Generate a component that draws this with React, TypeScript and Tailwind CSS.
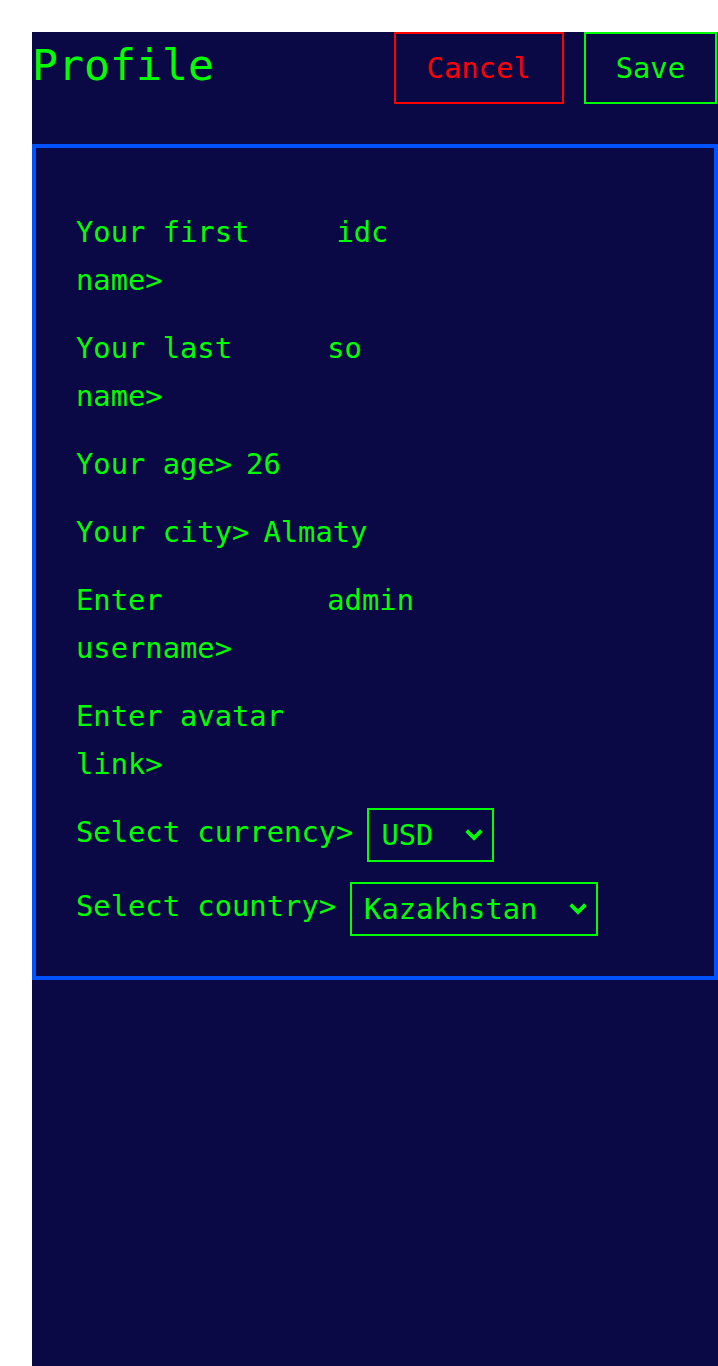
import { ChangeEvent, useState } from 'react';

interface Field {
    label: string;
    value: string;
}

const fields: Field[] = [
    { label: 'Your first name>', value: 'idc' },
    { label: 'Your last name>', value: 'so' },
    { label: 'Your age>', value: '26' },
    { label: 'Your city>', value: 'Almaty' },
    { label: 'Enter username>', value: 'admin' },
    { label: 'Enter avatar link>', value: '' },
];

const currencies = ['USD', 'EUR', 'KZT', 'RUB'];
const countries = ['Kazakhstan', 'Russia', 'USA', 'Germany'];

function Chevron() {
    return (
        <svg
            className="pointer-events-none absolute right-[10px] top-1/2 -translate-y-1/2"
            width="20"
            height="14"
            viewBox="0 0 20 14"
            fill="none"
        >
            <path d="M4 4 L10 10 L16 4" stroke="#00ff00" strokeWidth="3.8" strokeLinecap="square" />
        </svg>
    );
}

function SelectRow({ label, options, value, onChange }: {
    label: string;
    options: string[];
    value: string;
    onChange: (v: string) => void;
}) {
    return (
        <div className="mt-[20px] flex items-start gap-[14px]">
            <label className="shrink-0 leading-[48px]">{label}</label>
            <span className="relative inline-block">
                <select
                    value={value}
                    onChange={(e: ChangeEvent<HTMLSelectElement>) => onChange(e.target.value)}
                    className="h-[54px] appearance-none border-2 border-[#00ff00] bg-transparent pl-[12px] pr-[58px] leading-[48px] text-[#00ff00] outline-none"
                >
                    {options.map(o => (
                        <option key={o} value={o} className="bg-[#0b0846]">{o}</option>
                    ))}
                </select>
                <Chevron />
            </span>
        </div>
    );
}

export default function App() {
    const [currency, setCurrency] = useState('USD');
    const [country, setCountry] = useState('Kazakhstan');

    return (
        <div className="min-h-screen bg-white pl-[32px] pt-[32px] font-['DejaVu_Sans_Mono',monospace] text-[28.8px] text-[#00ff00]">
            <div className="min-h-[1334px] bg-[#0b0846]">
                {/* Header */}
                <div className="flex items-start">
                    <h1 className="flex-1 pt-[8px] text-[43.2px] leading-[50px]">Profile</h1>
                    <button className="h-[72px] border-2 border-[#ff0000] px-[31px] leading-[48px] text-[#ff0000]">
                        Cancel
                    </button>
                    <button className="ml-[20px] mr-[1px] h-[72px] border-2 border-[#00ff00] px-[30px] leading-[48px] text-[#00ff00]">
                        Save
                    </button>
                </div>

                {/* Form */}
                <div className="mt-[40px] border-4 border-[#0052ff] px-[40px] pb-[40px] pt-[40px]">
                    {fields.map(f => (
                        <div key={f.label} className="mt-[20px] flex items-start gap-[14px]">
                            <label className="leading-[48px]">{f.label}</label>
                            <input
                                defaultValue={f.value}
                                className="h-[48px] w-[380px] min-w-0 bg-transparent p-0 leading-[48px] text-[#00ff00] outline-none"
                            />
                        </div>
                    ))}
                    <SelectRow label="Select currency>" options={currencies} value={currency} onChange={setCurrency} />
                    <SelectRow label="Select country>" options={countries} value={country} onChange={setCountry} />
                </div>
            </div>
        </div>
    );
}
